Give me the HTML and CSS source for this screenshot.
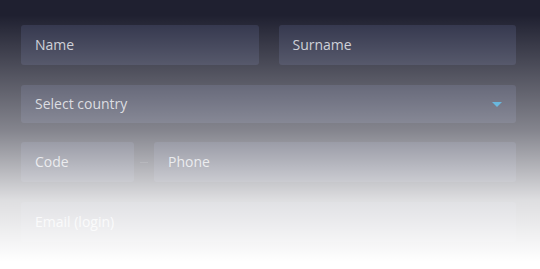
FILE: index.html
```html
<html>
    <head>
        <meta charset="utf-8">
        <title>Register</title>
        <link rel="stylesheet" href="styles.css">
    </head>
    <body>
        <div class="form">
            <div class="linha">
                <div class="campo">Name</div>
                <div class="campo">Surname</div>
            </div>
            <div class="linha">
                <div class="campo select">Select country<span class="seta"></span></div>
            </div>
            <div class="linha telefone">
                <div class="campo codigo">Code</div>
                <div class="traco"></div>
                <div class="campo">Phone</div>
            </div>
            <div class="linha email">
                <div class="campo">Email (login)</div>
            </div>
            <div class="fade"></div>
        </div>
    </body>
</html>
```

FILE: styles.css
```css
*{
    box-sizing: border-box;
}
body{
    margin: 0;
    background-color: #1f2030;
    font-family: 'Open Sans', sans-serif;
    overflow: hidden;
}
div.form{
    position: relative;
    height: 269px;
    padding: 25px 24px 0 21px;
    display: flex;
    flex-direction: column;
    gap: 20px;
}
div.linha{
    display: flex;
    gap: 20px;
}
div.campo{
    flex: 1;
    height: 40px;
    padding: 0 14px 2px 14px;
    display: flex;
    align-items: center;
    border-radius: 3px;
    background-color: rgba(110, 120, 170, 0.2);
    color: #c9cbd3;
    font-size: 14px;
}
div.select{
    height: 38px;
    justify-content: space-between;
}
span.seta{
    width: 0;
    height: 0;
    margin-top: 2px;
    border-left: 5px solid transparent;
    border-right: 5px solid transparent;
    border-top: 5px solid #1a92cc;
}
div.telefone{
    gap: 0;
    align-items: center;
    margin-top: -1px;
}
div.codigo{
    flex: 0 0 113px;
}
div.traco{
    width: 20px;
    height: 1px;
    padding: 0 6px;
    background-clip: content-box;
    background-color: rgba(255, 255, 255, 0.12);
}
div.fade{
    position: absolute;
    left: 0;
    top: 0;
    right: 0;
    bottom: 0;
    background: linear-gradient(to bottom, rgba(255,255,255,0) 15px, rgba(255,255,255,0.45) 130px, rgba(255,255,255,0.85) 200px, #fff 262px);
}
```
